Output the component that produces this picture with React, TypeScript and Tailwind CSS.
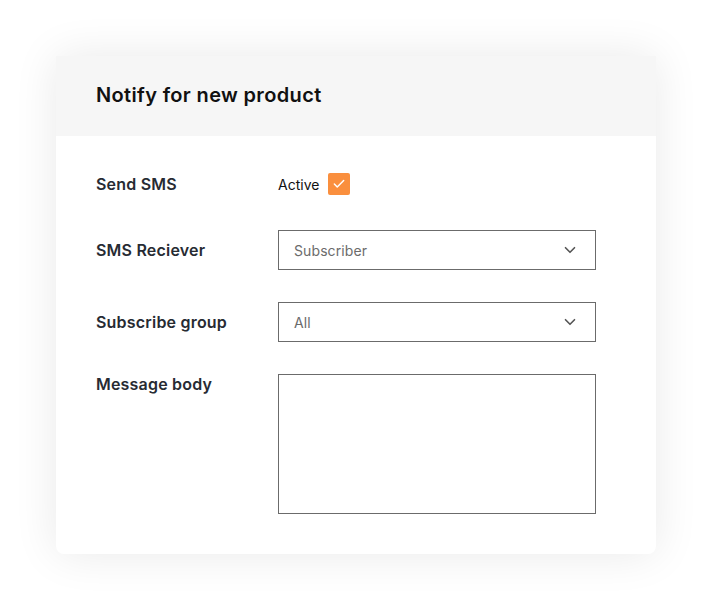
import { Check, ChevronDown } from "lucide-react";

function SelectBox({ value }: { value: string }) {
  return (
    <div className="flex h-10 w-[318px] items-center justify-between border border-[#6b6b6b] pl-[15px] pr-[16px]">
      <span className="text-[14px] tracking-[0.1px] text-[#6b6b6b]">{value}</span>
      <ChevronDown className="h-[18px] w-[18px] text-[#555]" strokeWidth={2.2} />
    </div>
  );
}

const label = "flex items-center text-[16px] leading-5 font-semibold tracking-[0.2px] text-[#272b33]";

export default function App() {
  return (
    <div className="min-h-screen bg-white pt-14 pl-14 font-['Inter',sans-serif]">
      <div className="w-[600px] rounded-b-lg bg-white shadow-[0_0_45px_rgba(0,0,0,0.09)]">
        <div className="flex h-20 items-center bg-[#f6f6f6] px-10 pb-[2px]">
          <h1 className="text-[20px] font-semibold tracking-[0.35px] text-[#111]">Notify for new product</h1>
        </div>

        <div className="grid grid-cols-[182px_1fr] px-10 pt-[37px] pb-10">
          <div className={label}>Send SMS</div>
          <div className="flex items-center gap-[9px]">
            <span className="text-[14px] text-[#111]">Active</span>
            <span className="flex h-[22px] w-[22px] items-center justify-center rounded-[2px] bg-[#fa8f3e]">
              <Check className="h-[14px] w-[14px] text-white" strokeWidth={2.5} />
            </span>
          </div>

          <div className={`mt-[35px] ${label}`}>SMS Reciever</div>
          <div className="mt-[35px]">
            <SelectBox value="Subscriber" />
          </div>

          <div className={`mt-8 ${label}`}>Subscribe group</div>
          <div className="mt-8">
            <SelectBox value="All" />
          </div>

          <div className={`mt-8 self-start ${label}`}>Message body</div>
          <div className="mt-8">
            <textarea className="block h-[140px] w-[318px] resize-none border border-[#6b6b6b] outline-none" />
          </div>
        </div>
      </div>
    </div>
  );
}
